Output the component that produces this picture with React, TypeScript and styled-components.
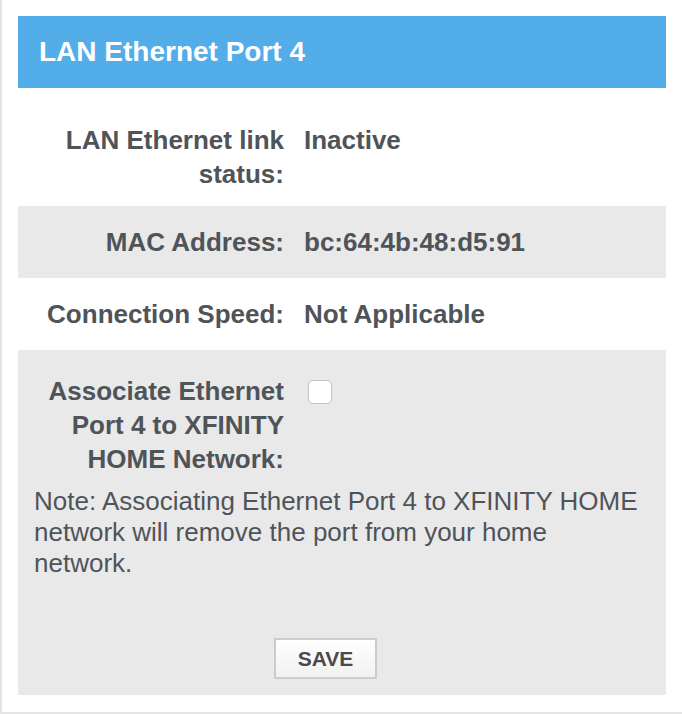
import React from "react";
import styled, { createGlobalStyle } from "styled-components";

const GlobalStyle = createGlobalStyle`
  html, body {
    margin: 0;
    padding: 0;
    background: #ffffff;
  }
  body {
    font-family: "Liberation Sans", Arial, Helvetica, sans-serif;
    color: #4f5459;
  }
`;

const Page = styled.div`
  width: 682px;
  box-sizing: border-box;
  border-left: 2px solid #e4e4e4;
  border-bottom: 2px solid #e4e4e4;
  padding: 16px 16px 17px 16px;
  background: #ffffff;
`;

const Card = styled.section`
  width: 648px;
  display: flex;
  flex-direction: column;
`;

const Header = styled.h2`
  margin: 0;
  height: 72px;
  padding-left: 21px;
  background: #52ade9;
  color: #ffffff;
  font-size: 28px;
  font-weight: 700;
  line-height: 72px;
`;

const Row = styled.div<{ $shaded?: boolean; $pt?: number; $pb?: number }>`
  display: grid;
  grid-template-columns: 266px 1fr;
  column-gap: 20px;
  padding-top: ${(p) => p.$pt ?? 19}px;
  padding-bottom: ${(p) => p.$pb ?? 19}px;
  background: ${(p) => (p.$shaded ? "#e9e9e9" : "#ffffff")};
  font-size: 26px;
  font-weight: 700;
  line-height: 34px;
`;

const Label = styled.div`
  text-align: right;
`;

const Value = styled.div``;

const Section = styled.div`
  background: #e9e9e9;
  padding: 24px 0 16px;
  display: flex;
  flex-direction: column;
`;

const FieldRow = styled.div`
  display: grid;
  grid-template-columns: 266px 1fr;
  column-gap: 20px;
  font-size: 26px;
  font-weight: 700;
  line-height: 34px;
`;

const CheckBox = styled.span`
  display: block;
  width: 22px;
  height: 22px;
  margin: 6px 0 0 4px;
  border: 1px solid #c4c4c4;
  border-radius: 5px;
  background: #ffffff;
`;

const Note = styled.p`
  margin: 10px 0 0;
  padding: 0 16px;
  font-size: 26px;
  font-weight: 400;
  line-height: 31px;
`;

const ButtonBar = styled.div`
  display: flex;
  padding-left: 256px;
  margin-top: 59px;
`;

const SaveButton = styled.button`
  width: 103px;
  height: 41px;
  box-sizing: border-box;
  border: 2px solid #cccccc;
  border-radius: 0;
  background: linear-gradient(#ffffff, #f1f1f1);
  font-family: "Liberation Sans", Arial, Helvetica, sans-serif;
  font-size: 21px;
  font-weight: 700;
  color: #4a4a4a;
  padding: 0;
  cursor: pointer;
`;

export default function App() {
  return (
    <>
      <GlobalStyle />
      <Page>
        <Card>
          <Header>LAN Ethernet Port 4</Header>
          <Row $pt={35} $pb={15}>
            <Label>LAN Ethernet link status:</Label>
            <Value>Inactive</Value>
          </Row>
          <Row $shaded>
            <Label>MAC Address:</Label>
            <Value>bc:64:4b:48:d5:91</Value>
          </Row>
          <Row>
            <Label>Connection Speed:</Label>
            <Value>Not Applicable</Value>
          </Row>
          <Section>
            <FieldRow>
              <Label>Associate Ethernet Port 4 to XFINITY HOME Network:</Label>
              <Value>
                <CheckBox role="checkbox" aria-checked="false" />
              </Value>
            </FieldRow>
            <Note>
              Note: Associating Ethernet Port 4 to XFINITY HOME network will
              remove the port from your home network.
            </Note>
            <ButtonBar>
              <SaveButton>SAVE</SaveButton>
            </ButtonBar>
          </Section>
        </Card>
      </Page>
    </>
  );
}
